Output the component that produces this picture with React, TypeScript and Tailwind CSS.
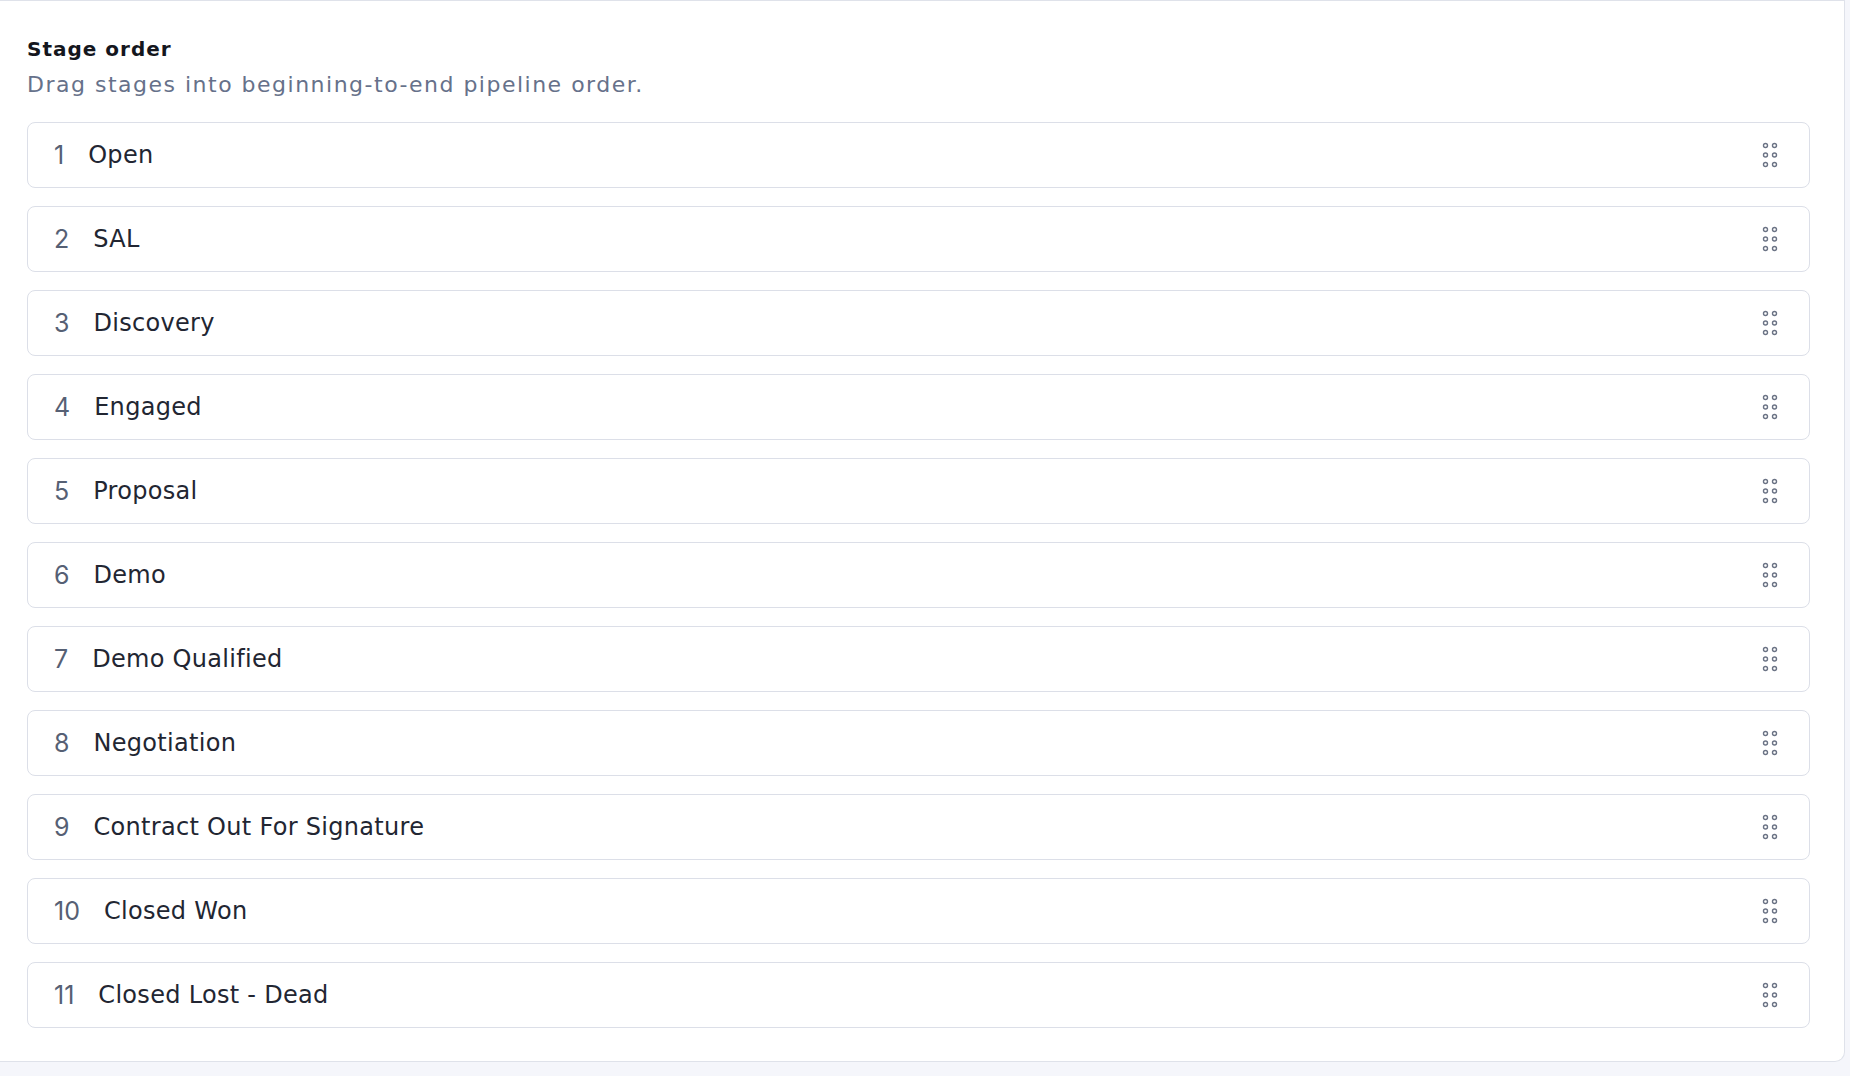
import React from 'react';

const stages = [
  'Open',
  'SAL',
  'Discovery',
  'Engaged',
  'Proposal',
  'Demo',
  'Demo Qualified',
  'Negotiation',
  'Contract Out For Signature',
  'Closed Won',
  'Closed Lost - Dead',
];

function DragHandle() {
  const xs = [4.5, 13.5];
  const ys = [4.5, 14, 23.5];
  return (
    <svg width="18" height="28" viewBox="0 0 18 28" fill="none" className="shrink-0 text-[#6b7385]">
      {ys.map(y =>
        xs.map(x => (
          <circle key={`${x}-${y}`} cx={x} cy={y} r="2" stroke="currentColor" strokeWidth="1.4" />
        ))
      )}
    </svg>
  );
}

function StageRow({ index, name }: { index: number; name: string }) {
  return (
    <div className="flex h-[66px] items-center rounded-[8px] border border-[#dcdfe8] bg-white pl-[26px] pr-[30px]">
      <span className="font-['Inter',sans-serif] text-[25px] leading-none text-[#566074]">{index}</span>
      <span className="ml-[24px] text-[24px] leading-none tracking-[0.3px] text-[#222632]">{name}</span>
      <div className="ml-auto">
        <DragHandle />
      </div>
    </div>
  );
}

export default function App() {
  return (
    <div className="h-[1076px] w-full overflow-hidden bg-[#f5f6fb] font-['DejaVu_Sans',sans-serif]">
      <section className="h-[1062px] w-[1845px] rounded-br-[10px] border-y border-r border-[#dfe2ea] bg-white pl-[27px] pr-[34px] pt-[33px]">
        <h2 className="text-[20px] font-semibold leading-[30px] tracking-[1px] text-[#14161d]">Stage order</h2>
        <p className="mt-[6px] text-[22px] leading-[30px] tracking-[1.5px] text-[#66718a]">
          Drag stages into beginning-to-end pipeline order.
        </p>
        <div className="mt-[22px] flex flex-col gap-[18px]">
          {stages.map((name, i) => (
            <StageRow key={name} index={i + 1} name={name} />
          ))}
        </div>
      </section>
    </div>
  );
}
